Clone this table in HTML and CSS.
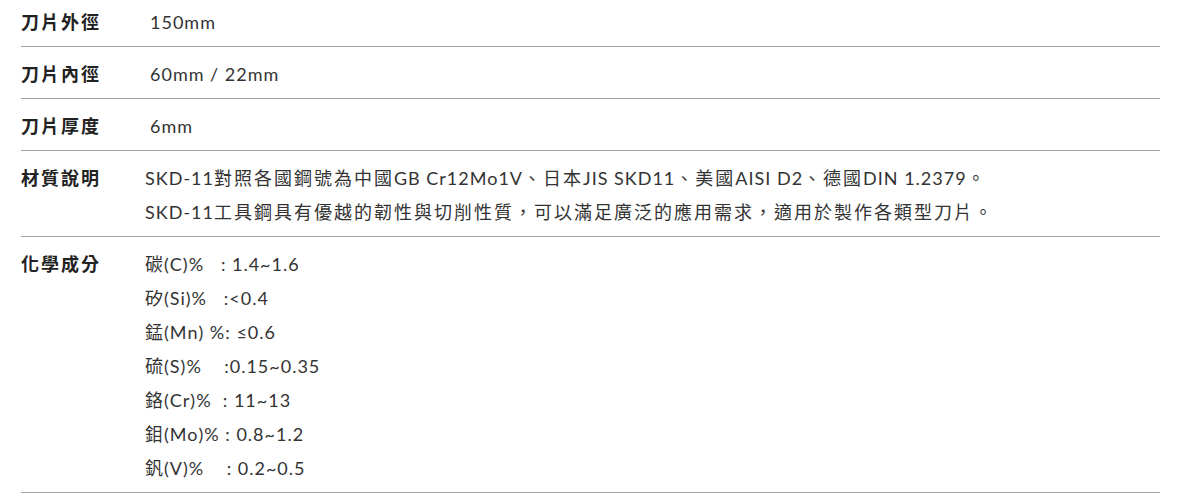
FILE: index.html
```html
<!DOCTYPE html>
<html lang="zh-TW">

<head>
    <meta charset="UTF-8">
    <meta name="viewport" content="width=device-width, initial-scale=1.0">
    <title>刀片規格</title>
    <link rel="stylesheet" href="styles.css">
</head>

<body>
    <div class="spec">
        <div class="spec-row spec-row-short">
            <div class="spec-label">刀片外徑</div>
            <div class="spec-value">150mm</div>
        </div>
        <div class="spec-row spec-row-short">
            <div class="spec-label">刀片內徑</div>
            <div class="spec-value">60mm / 22mm</div>
        </div>
        <div class="spec-row spec-row-short">
            <div class="spec-label">刀片厚度</div>
            <div class="spec-value">6mm</div>
        </div>
        <div class="spec-row">
            <div class="spec-label">材質說明</div>
            <div class="spec-value">
                <p>SKD-11<span class="zh">對照各國鋼號為中國</span>GB Cr12Mo1V<span class="zh">、日本</span>JIS SKD11<span class="zh">、美國</span>AISI D2<span class="zh">、德國</span>DIN 1.2379<span class="zh">。</span></p>
                <p>SKD-11<span class="zh">工具鋼具有優越的韌性與切削性質，可以滿足廣泛的應用需求，適用於製作各類型刀片。</span></p>
            </div>
        </div>
        <div class="spec-row">
            <div class="spec-label">化學成分</div>
            <div class="spec-value chem">
                <p>碳(C)%&nbsp;&nbsp; : 1.4~1.6</p>
                <p>矽(Si)%&nbsp;&nbsp; :&lt;0.4</p>
                <p>錳(Mn) %: ≤0.6</p>
                <p>硫(S)%&nbsp;&nbsp;&nbsp; :0.15~0.35</p>
                <p>鉻(Cr)%&nbsp; : 11~13</p>
                <p>鉬(Mo)% : 0.8~1.2</p>
                <p>釩(V)%&nbsp;&nbsp;&nbsp; : 0.2~0.5</p>
            </div>
        </div>
    </div>
</body>

</html>
```

FILE: styles.css
```css
* {
    margin: 0;
    padding: 0;
    box-sizing: border-box;
}

body {
    font-family: Lato, 'Noto Sans CJK TC', sans-serif;
    font-size: 18px;
    letter-spacing: 1px;
    color: #333;
    background: #fff;
}

.spec {
    width: 1139px;
    margin-left: 21px;
}

.spec-row {
    display: grid;
    grid-template-columns: 124px 1fr;
    padding: 10px 0 7px;
    line-height: 34px;
    border-bottom: 1px solid #a3a3a3;
}

.spec-row:first-child {
    padding-top: 5px;
}

.spec-row-short {
    grid-template-columns: 129px 1fr;
}

.spec-label {
    font-weight: bold;
    color: #222;
    letter-spacing: 2px;
}

.spec-value {
    color: #333;
}

/* 中文字距較寬 */
.zh {
    letter-spacing: 2px;
}
```
